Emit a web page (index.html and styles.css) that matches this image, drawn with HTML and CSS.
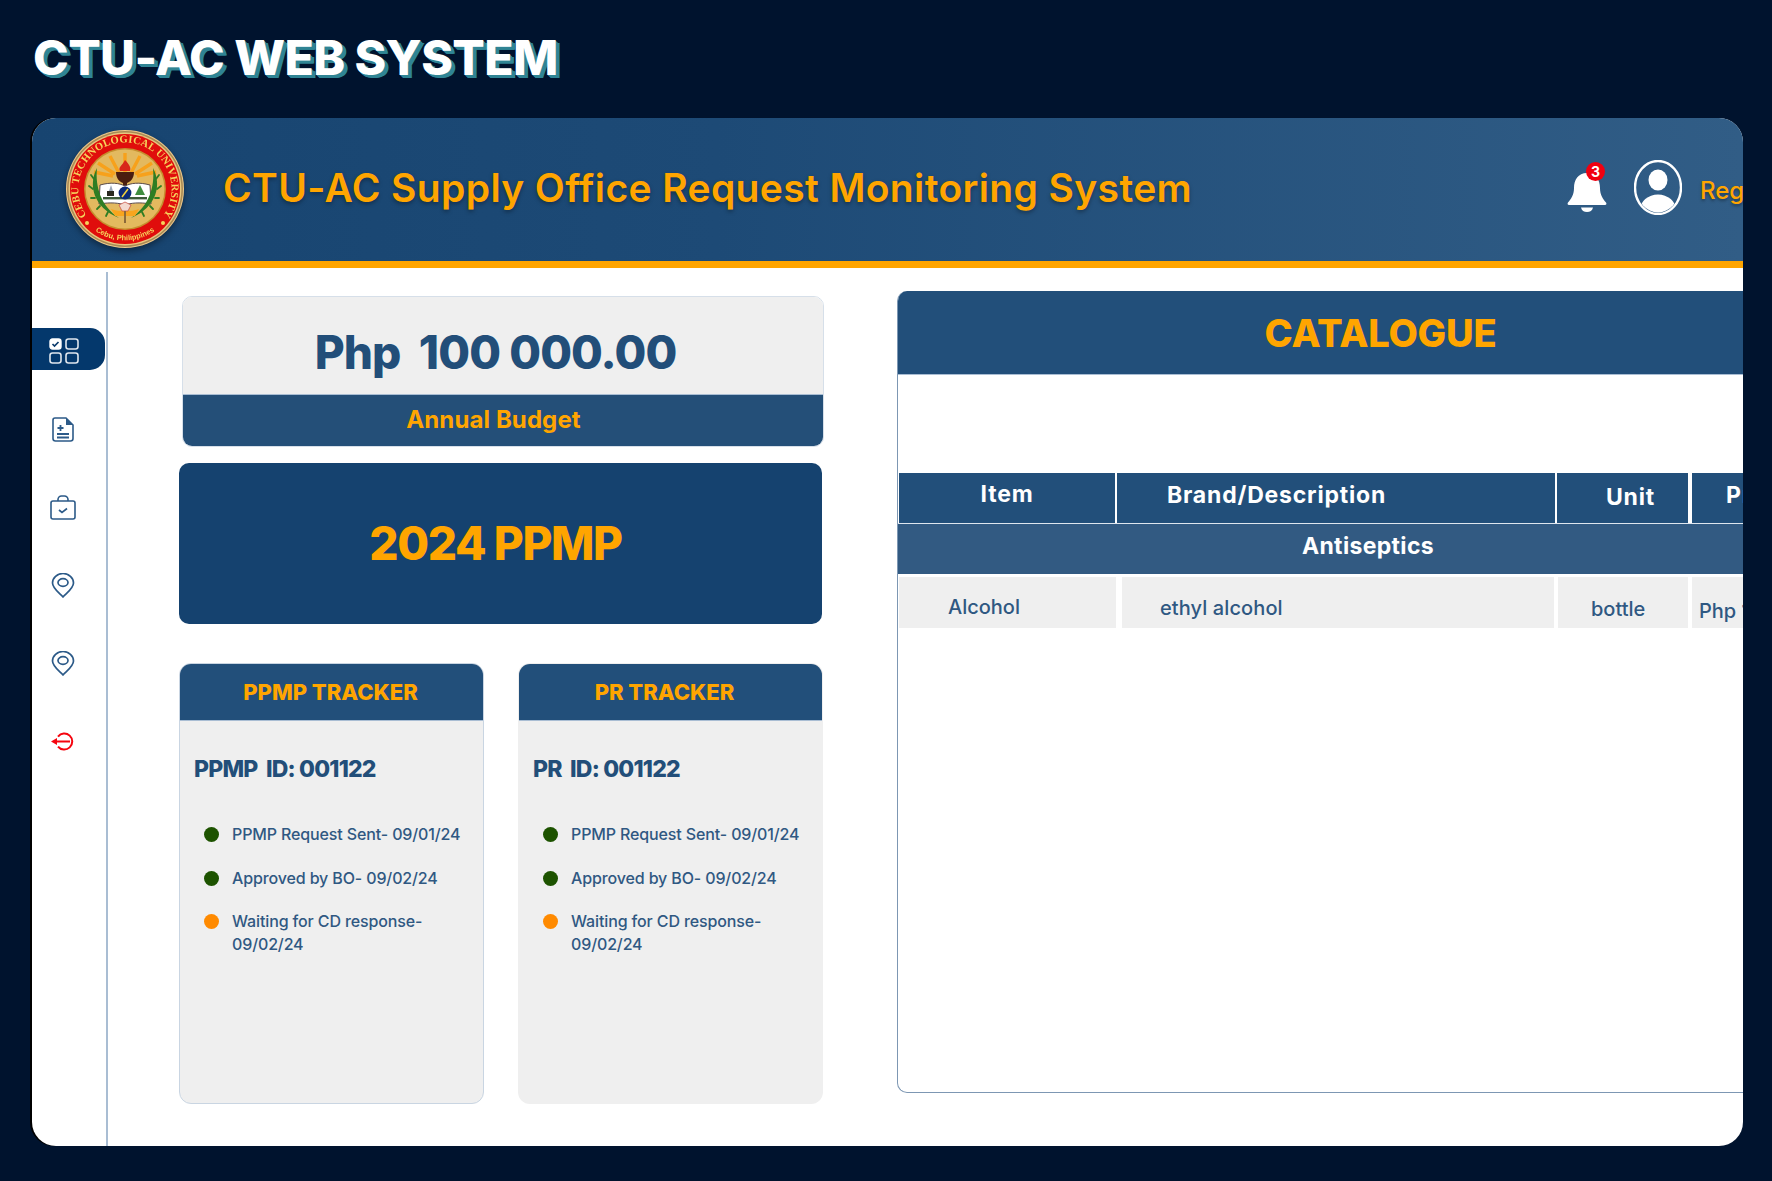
FILE: index.html
```html
<!DOCTYPE html>
<html lang="en">
<head>
<meta charset="utf-8">
<title>CTU-AC WEB SYSTEM</title>
<link rel="stylesheet" href="styles.css">
</head>
<body>
<div class="page">
  <h1 class="page-title">CTU-AC WEB SYSTEM</h1>
  <div class="app">
    <header class="topbar">
      <svg class="logo" viewBox="-62 -62 124 124" aria-hidden="true">
        <defs>
          <path id="arcTop" d="M-33,33 A46.6 46.6 0 1 1 33,33"/>
          <path id="arcBottom" d="M-31,41 A51.5 51.5 0 0 0 31,41"/>
        </defs>
        <circle r="59" fill="#f0c98a"/>
        <circle r="58" fill="#a88a55"/>
        <circle r="56.4" fill="#e8c77f"/>
        <circle r="55" fill="#e00d0c"/>
        <circle r="41" fill="#c58f2e"/>
        <circle r="39.5" fill="#e3b95f"/>
        <g stroke="#f7a11b" stroke-width="3.4">
          <path d="M0,-16 L0,-36M-6,-16 L-15,-33M6,-16 L15,-33M-10,-15 L-27,-26M10,-15 L27,-26M-12,-13 L-31,-17M12,-13 L31,-17"/>
        </g>
        <path d="M0,-29 C5,-24 6,-21 5,-18 L-5,-18 C-7,-22 -3,-23 0,-29Z" fill="#d8261a"/>
        <path d="M-9,-17 H9 C9,-10 5,-7 2,-6 L2,-1 H-2 L-2,-6 C-5,-7 -9,-10 -9,-17Z" fill="#4a1d10"/>
        <path d="M-25,-4 C-14,-7 -6,-6 0,-3 C6,-6 14,-7 25,-4 L26,15 C14,13 6,14 0,16 C-6,14 -14,13 -26,15Z" fill="#fff" stroke="#5a4b4b" stroke-width="1"/>
        <rect x="-22" y="8" width="44" height="2.4" fill="#3c5a3a"/>
        <circle cx="0" cy="4" r="6.4" fill="#0b2a78"/>
        <path d="M3,0 L-3,8" stroke="#f4d23b" stroke-width="1.6"/>
        <path d="M15,-4 L20,6 L10,6Z" fill="#3f8d3f"/>
        <rect x="-18" y="2" width="7" height="5" fill="#2a2a20"/>
        <path d="M-14,-4 l2,6 h-4Z" fill="#9aa7b8"/>
        <path d="M-28,-21 C-37,-4 -32,18 -6,29 C-24,17 -30,-2 -28,-21Z" fill="#2f7d23"/>
        <path d="M28,-21 C37,-4 32,18 6,29 C24,17 30,-2 28,-21Z" fill="#2f7d23"/>
        <g stroke="#2f7d23" stroke-width="1.8" stroke-linecap="round">
          <path d="M-31,-10 l-3,-4M-32,0 l-4,-3M-30,9 l-4,0M-25,17 l-3,3M-17,23 l-2,4M31,-10 l3,-4M32,0 l4,-3M30,9 l4,0M25,17 l3,3M17,23 l2,4"/>
        </g>
        <path d="M-14,20 C-6,23 6,23 14,20 L10,27 H-10Z" fill="#f8a51e"/>
        <path d="M-6,16 L0,13 L6,16 L3,22 H-3Z" fill="#f3d9cf" stroke="#c8453a" stroke-width=".7"/>
        <rect x="-1" y="22" width="2" height="12" fill="#8c6a3a"/>
        <text class="logo-ring-text"><textPath href="#arcTop" startOffset="50%" text-anchor="middle">CEBU TECHNOLOGICAL UNIVERSITY</textPath></text>
        <text class="logo-base-text"><textPath href="#arcBottom" startOffset="50%" text-anchor="middle">Cebu, Philippines</textPath></text>
        <circle cx="-38" cy="34" r="2" fill="#f6d35c"/>
        <circle cx="38" cy="34" r="2" fill="#f6d35c"/>
      </svg>
      <div class="system-name">CTU-AC Supply Office Request Monitoring System</div>
      <div class="topbar-tools">
        <div class="bell">
          <svg class="bell-icon" viewBox="0 0 40 42" aria-hidden="true">
            <path d="M20 2C11 2 7 9 7 17C7 24 4 28 1 31.500C.2 32.600 .6 34 2 34H38C39.400 34 39.800 32.600 39 31.500C36 28 33 24 33 17C33 9 29 2 20 2Z" fill="#fff"/>
            <path d="M14 36.500H26C25.500 39.500 23 41 20 41C17 41 14.500 39.500 14 36.500Z" fill="#fff"/>
          </svg>
          <span class="badge">3</span>
        </div>
        <svg class="user-icon" viewBox="0 0 48 55" aria-hidden="true">
          <defs><clipPath id="userClip"><ellipse cx="24" cy="27.500" rx="21.500" ry="25"/></clipPath></defs>
          <ellipse cx="24" cy="27.500" rx="23" ry="26.500" fill="none" stroke="#fff" stroke-width="2.400"/>
          <ellipse cx="24" cy="20" rx="9.500" ry="10.500" fill="#fff"/>
          <ellipse cx="24" cy="50" rx="18" ry="15.500" fill="#fff" clip-path="url(#userClip)"/>
        </svg>
        <span class="user-name">Reg</span>
      </div>
    </header>
    <div class="workspace">
      <nav class="sidebar">
        <a class="nav-item nav-item-active">
          <svg class="nav-icon" viewBox="0 0 30 26" aria-hidden="true">
            <rect x="1" y="1" width="11" height="10" rx="2.500" fill="#fff" stroke="#fff" stroke-width="1.400"/>
            <path d="M3.500 6l2 2 4-4" fill="none" stroke="#0a3a6c" stroke-width="1.700"/>
            <rect x="17" y="1" width="12" height="10" rx="2.500" fill="none" stroke="#dfe6ee" stroke-width="1.600"/>
            <rect x="1" y="15" width="11" height="10" rx="2.500" fill="none" stroke="#dfe6ee" stroke-width="1.600"/>
            <rect x="17" y="15" width="12" height="10" rx="2.500" fill="none" stroke="#dfe6ee" stroke-width="1.600"/>
          </svg>
        </a>
        <a class="nav-item">
          <svg class="nav-icon nav-icon-doc" viewBox="0 0 24 25" aria-hidden="true">
            <path d="M4 1H15L22 8V21.500A2.500 2.500 0 0 1 19.500 24H4.500A2.500 2.500 0 0 1 2 21.500V3A2 2 0 0 1 4 1Z" fill="none" stroke="#2c5a88" stroke-width="1.600"/>
            <path d="M15 1V8H22Z" fill="#2c5a88"/>
            <path d="M9.500 8V14M6.500 11H12.500M6 17H18M6 20.500H18" stroke="#2c5a88" stroke-width="1.800" fill="none"/>
          </svg>
        </a>
        <a class="nav-item">
          <svg class="nav-icon nav-icon-bag" viewBox="0 0 26 25" aria-hidden="true">
            <rect x="1" y="6" width="24" height="18" rx="2" fill="none" stroke="#2c5a88" stroke-width="1.600"/>
            <path d="M8 6V4.500A3.500 3.500 0 0 1 11.500 1H14.500A3.500 3.500 0 0 1 18 4.500V6" fill="none" stroke="#2c5a88" stroke-width="1.600"/>
            <path d="M9 15l3 2.500 5-4" fill="none" stroke="#2c5a88" stroke-width="1.700"/>
          </svg>
        </a>
        <a class="nav-item">
          <svg class="nav-icon nav-icon-pin" viewBox="0 0 24 25" aria-hidden="true">
            <path d="M12 24C7 19 1.500 15 1.500 10A10.500 9.500 0 0 1 22.500 10C22.500 15 17 19 12 24Z" fill="none" stroke="#2c5a88" stroke-width="1.700"/>
            <ellipse cx="12" cy="9.500" rx="5" ry="3.800" fill="none" stroke="#2c5a88" stroke-width="1.700"/>
          </svg>
        </a>
        <a class="nav-item">
          <svg class="nav-icon nav-icon-pin" viewBox="0 0 24 25" aria-hidden="true">
            <path d="M12 24C7 19 1.500 15 1.500 10A10.500 9.500 0 0 1 22.500 10C22.500 15 17 19 12 24Z" fill="none" stroke="#2c5a88" stroke-width="1.700"/>
            <ellipse cx="12" cy="9.500" rx="5" ry="3.800" fill="none" stroke="#2c5a88" stroke-width="1.700"/>
          </svg>
        </a>
        <a class="nav-item">
          <svg class="nav-icon nav-icon-exit" viewBox="0 0 25 19" aria-hidden="true">
            <path d="M7 4.500A8 8 0 1 1 7 14.500" fill="none" stroke="#f5050f" stroke-width="2"/>
            <path d="M5 9.500H19" stroke="#f5050f" stroke-width="2"/>
            <path d="M0 9.500L6 6V13Z" fill="#f5050f"/>
          </svg>
        </a>
      </nav>
      <main class="content">
        <section class="left-column">
          <div class="budget-card">
            <div class="budget-amount">Php&nbsp; 100 000.00</div>
            <div class="budget-label">Annual Budget</div>
          </div>
          <div class="ppmp-card">2024 PPMP</div>
          <div class="tracker-row">
            <article class="tracker tracker-bordered">
              <h2 class="tracker-title tracker-title-ppmp">PPMP TRACKER</h2>
              <div class="tracker-id">PPMP&nbsp; ID: 001122</div>
              <ul class="tracker-steps">
                <li class="step step-done">PPMP Request Sent- 09/01/24</li>
                <li class="step step-done">Approved by BO- 09/02/24</li>
                <li class="step step-wait">Waiting for CD response- 09/02/24</li>
              </ul>
            </article>
            <article class="tracker">
              <h2 class="tracker-title tracker-title-pr">PR TRACKER</h2>
              <div class="tracker-id">PR&nbsp; ID: 001122</div>
              <ul class="tracker-steps">
                <li class="step step-done">PPMP Request Sent- 09/01/24</li>
                <li class="step step-done">Approved by BO- 09/02/24</li>
                <li class="step step-wait">Waiting for CD response- 09/02/24</li>
              </ul>
            </article>
          </div>
        </section>
        <section class="catalogue">
          <h2 class="catalogue-title">CATALOGUE</h2>
          <div class="catalogue-head">
            <div class="head-cell head-item">Item</div>
            <div class="head-cell head-brand">Brand/Description</div>
            <div class="head-cell head-unit">Unit</div>
            <div class="head-cell head-price">Price</div>
          </div>
          <div class="catalogue-group">Antiseptics</div>
          <div class="catalogue-row">
            <div class="row-cell row-item">Alcohol</div>
            <div class="row-cell row-brand">ethyl alcohol</div>
            <div class="row-cell row-unit">bottle</div>
            <div class="row-cell row-price">Php 100.00</div>
          </div>
        </section>
      </main>
    </div>
  </div>
</div>
</body>
</html>
```

FILE: styles.css
```css
* { box-sizing: border-box; }
html, body { margin: 0; padding: 0; }
body {
  background: #00132e;
  font-family: Inter, "Liberation Sans", sans-serif;
  color: #224e79;
  overflow: hidden;
}
.page { width: 1772px; height: 1181px; padding-left: 32px; }
.page-title {
  margin: 0;
  height: 118px;
  padding: 0 0 4px 1px;
  display: flex;
  align-items: center;
  font-size: 48px;
  font-weight: 800;
  letter-spacing: -0.55px;
  color: #fff;
  text-shadow: 1px 1px 0 #2f8494, 2px 2px 0 #2f8494, 3px 3px 0 #2f8494, 4px 3px 0 #2f8494;
}
.app {
  width: 1711px;
  height: 1028px;
  background: #fff;
  border-radius: 24px;
  overflow: hidden;
  box-shadow: -2px 0 0 #000;
}
.topbar {
  height: 150px;
  border-bottom: 7px solid #ffa500;
  background: linear-gradient(90deg, #174470 0%, #1d4a76 40%, #315d86 100%);
  display: flex;
  align-items: center;
  padding-left: 31px;
}
.logo {
  width: 124px;
  height: 124px;
  flex: none;
  margin-bottom: 2px;
  filter: drop-shadow(0 3px 3px rgba(0,0,0,.4));
}
.logo-ring-text {
  font-family: "Liberation Serif", serif;
  font-weight: 700;
  font-size: 10.6px;
  letter-spacing: .2px;
  fill: #f6d35c;
}
.logo-base-text {
  font-family: "Liberation Sans", sans-serif;
  font-weight: 700;
  font-size: 7.5px;
  fill: #f6d35c;
}
.system-name {
  margin-left: 36px;
  padding-bottom: 4px;
  font-size: 39px;
  font-weight: 600;
  letter-spacing: .37px;
  color: #ffa500;
  white-space: nowrap;
  text-shadow: 0 2px 4px rgba(0,0,0,.35);
}
.topbar-tools {
  margin-left: auto;
  display: flex;
  align-items: center;
  width: 176px;
  flex: none;
}
.bell { position: relative; width: 40px; height: 42px; flex: none; margin-top: 4px; }
.bell-icon { display: block; width: 40px; height: 42px; }
.badge {
  position: absolute;
  top: -9px;
  left: 19px;
  width: 19px;
  height: 19px;
  border-radius: 50%;
  background: #f10010;
  color: #fff;
  font-size: 14px;
  font-weight: 700;
  line-height: 19px;
  text-align: center;
}
.user-icon { width: 48px; height: 55px; flex: none; margin: 0 0 5px 27px; }
.user-name {
  margin-left: 18px;
  font-size: 24px;
  font-weight: 500;
  color: #ffa500;
  white-space: nowrap;
  text-shadow: 0 2px 3px rgba(0,0,0,.35);
  padding-top: 2px;
}
.workspace { display: flex; height: 878px; }
.sidebar {
  width: 76px;
  flex: none;
  margin-top: 4px;
  padding-top: 56px;
  border-right: 2px solid #a9bdd3;
  display: flex;
  flex-direction: column;
  gap: 36px;
}
.nav-item {
  height: 42px;
  display: flex;
  align-items: center;
  justify-content: center;
  padding-right: 12px;
}
.nav-item-active {
  background: #04386c;
  border-radius: 0 15px 15px 0;
  margin-bottom: 2px;
  width: 73px;
  padding: 3px 10px 0 0;
  flex: none;
}
.nav-icon { width: 30px; height: 26px; display: block; }
.nav-icon-doc { width: 24px; height: 25px; }
.nav-icon-bag { width: 26px; height: 25px; }
.nav-icon-pin { width: 24px; height: 25px; }
.nav-icon-exit { width: 25px; height: 19px; }
.content { display: flex; flex: 1; padding-left: 71px; min-width: 0; }
.left-column {
  width: 645px;
  flex: none;
  padding-top: 28px;
  display: flex;
  flex-direction: column;
}
.budget-card {
  margin-left: 3px;
  width: 642px;
  height: 151px;
  border-radius: 10px;
  overflow: hidden;
  border: 1px solid #d6dfe9;
  display: flex;
  flex-direction: column;
}
.budget-amount {
  height: 97px;
  background: #efefef;
  padding: 13px 15px 0 0;
  display: flex;
  align-items: center;
  justify-content: center;
  font-size: 46px;
  font-weight: 800;
  letter-spacing: -0.9px;
  color: #224e79;
  white-space: nowrap;
}
.budget-label {
  flex: 1;
  background: #244f78;
  border-top: 1px solid #a9bdd3;
  display: flex;
  align-items: center;
  justify-content: center;
  padding: 0 19px 2px 0;
  font-size: 24px;
  font-weight: 700;
  letter-spacing: .1px;
  color: #ffa500;
}
.ppmp-card {
  margin-top: 16px;
  height: 161px;
  width: 643px;
  border-radius: 10px;
  background: #15426f;
  display: flex;
  align-items: center;
  justify-content: center;
  padding: 0 10px 2px 0;
  font-size: 46px;
  font-weight: 800;
  letter-spacing: -1.4px;
  color: #ffa500;
}
.tracker-row {
  margin-top: 39px;
  display: flex;
  gap: 34px;
  width: 644px;
}
.tracker {
  width: 305px;
  height: 441px;
  flex: none;
  background: #efefef;
  border: 1px solid transparent;
  border-radius: 12px;
  overflow: hidden;
}
.tracker-bordered { border-color: #c9d5e2; }
.tracker-title {
  margin: 0;
  height: 57px;
  background: #224f7a;
  border-bottom: 1px solid #a9bdd3;
  display: flex;
  align-items: center;
  justify-content: center;
  font-size: 22px;
  font-weight: 800;
  letter-spacing: 0;
  color: #ffa500;
}
.tracker-title-ppmp { padding-right: 2px; }
.tracker-title-pr { padding-right: 12px; }
.tracker-id {
  margin: 33px 0 0 14px;
  font-size: 23px;
  font-weight: 800;
  line-height: 30px;
  letter-spacing: -0.8px;
  color: #224e79;
  white-space: nowrap;
}
.tracker-steps {
  list-style: none;
  margin: 39px 0 0;
  padding: 0 10px 0 52px;
  display: flex;
  flex-direction: column;
  gap: 21px;
}
.step {
  position: relative;
  font-size: 16px;
  font-weight: 500;
  line-height: 23px;
  color: #2f5882;
  letter-spacing: -0.13px;
}
.step::before {
  content: "";
  position: absolute;
  left: -28px;
  top: 4px;
  width: 15px;
  height: 15px;
  border-radius: 50%;
}
.step-done::before { background: #1d5300; }
.step-wait { margin-top: -1px; }
.step-wait::before { background: #ff8a00; }
.catalogue {
  margin: 23px 0 0 73px;
  width: 900px;
  height: 802px;
  flex: none;
  border-left: 1px solid #7d97b3;
  border-bottom: 1px solid #7d97b3;
  border-radius: 10px 0 0 10px;
  overflow: hidden;
}
.catalogue-title {
  margin: 0 0 98px;
  height: 84px;
  background: #224f7a;
  border-bottom: 1px solid #a9bdd3;
  padding-left: 66px;
  display: flex;
  align-items: center;
  justify-content: center;
  font-size: 38px;
  font-weight: 800;
  letter-spacing: -0.2px;
  color: #ffa500;
}
.catalogue-head {
  display: grid;
  grid-template-columns: 216px 438px 131px 1fr;
  column-gap: 2px;
  padding-left: 1px;
  height: 51px;
  border-bottom: 1px solid #dfe6ee;
}
.head-cell {
  background: #224f7a;
  color: #fff;
  font-size: 23px;
  font-weight: 700;
  letter-spacing: .8px;
  display: flex;
  padding-top: 7px;
}
.head-item { justify-content: center; }
.head-brand { padding-left: 50px; padding-top: 8px; }
.head-unit { justify-content: center; padding: 10px 0 0 16px; }
.head-price { margin-left: 2px; padding-left: 34px; padding-top: 8px; }
.catalogue-group {
  height: 50px;
  width: 846px;
  background: #325a82;
  color: #fff;
  font-size: 23px;
  font-weight: 700;
  letter-spacing: .35px;
  display: flex;
  justify-content: center;
  align-items: center;
  padding: 0 4px 6px 98px;
}
.catalogue-row {
  margin-top: 3px;
  display: flex;
  height: 51px;
  padding-left: 1px;
}
.row-cell {
  background: #efefef;
  color: #2f5882;
  font-size: 20px;
  font-weight: 500;
  white-space: nowrap;
  display: flex;
  align-items: center;
  flex: none;
}
.row-item { width: 217px; padding: 9px 0 0 49px; }
.row-brand { width: 432px; margin-left: 6px; padding: 11px 0 0 38px; letter-spacing: .1px; }
.row-unit { width: 130px; margin-left: 4px; padding: 13px 0 0 33px; }
.row-price { flex: 1; margin-left: 4px; padding: 17px 0 0 7px; }
```
